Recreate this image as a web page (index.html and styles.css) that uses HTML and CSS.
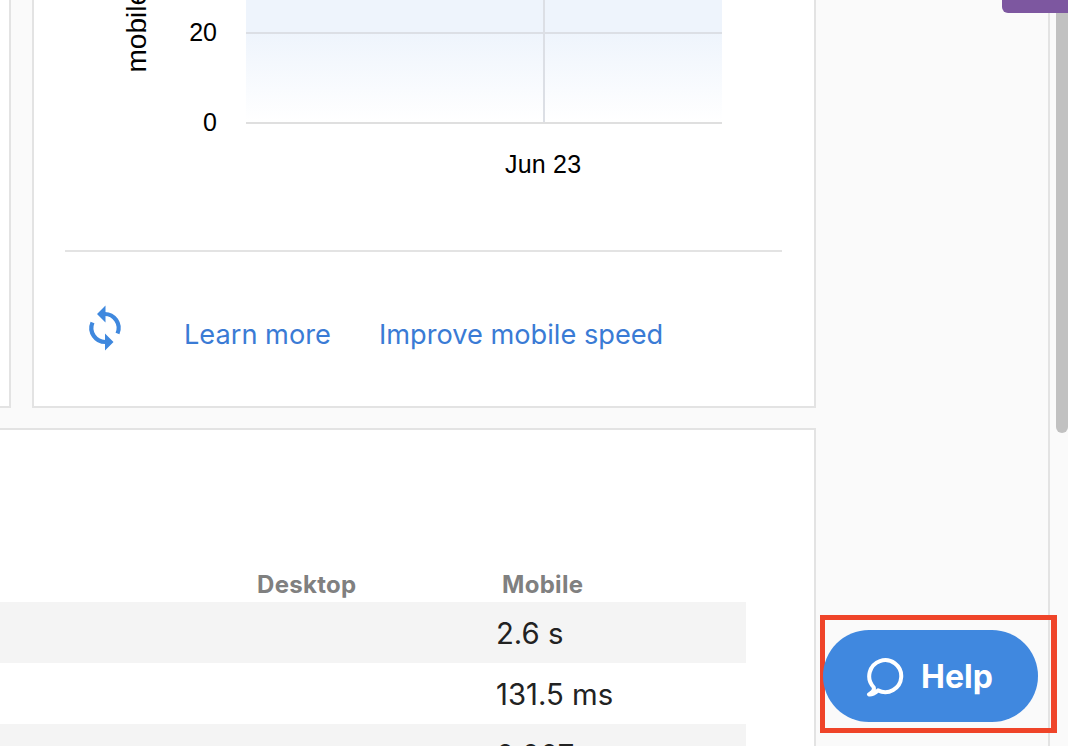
FILE: index.html
```html
<!DOCTYPE html>
<html>
<head>
    <title>Speed report</title>
    <link rel="stylesheet" href="styles.css">
</head>
<body>
    <div class="page">
        <main class="content">
            <div class="top-row">
                <section class="card side-card"></section>

                <!-- Mobile speed chart -->
                <section class="card chart-card">
                    <div class="chart">
                        <div class="y-title-box"><span class="y-title">mobile</span></div>
                        <div class="y-ticks">
                            <span class="tick tick-20">20</span>
                            <span class="tick tick-0">0</span>
                        </div>
                        <div class="plot-wrap">
                            <div class="plot"></div>
                            <div class="x-label">Jun 23</div>
                        </div>
                    </div>
                    <div class="card-footer">
                        <svg class="refresh-icon" viewBox="0 0 50 55" width="50" height="55">
                            <path fill="none" stroke="#3f88de" stroke-width="4.200" d="M24 14A14 14 0 0 1 37.500 33.500M12.500 22.500A14 14 0 0 0 26 42"/>
                            <path fill="#3f88de" d="M17 14L25.500 5.500V22.500ZM33.500 42L25 33.500V50.500Z"/>
                        </svg>
                        <a class="link link-learn">Learn more</a>
                        <a class="link">Improve mobile speed</a>
                    </div>
                </section>
            </div>

            <!-- Metrics table -->
            <section class="card table-card">
                <div class="table-head">
                    <span class="head-desktop">Desktop</span>
                    <span class="head-mobile">Mobile</span>
                </div>
                <div class="row shaded"><span class="cell">2.6 s</span></div>
                <div class="row"><span class="cell">131.5 ms</span></div>
                <div class="row shaded"><span class="cell">0.007</span></div>
            </section>
        </main>

        <!-- Fake browser scrollbar -->
        <div class="scrollbar"><div class="thumb"></div></div>
    </div>

    <div class="purple-tab"></div>

    <div class="help-outline">
        <button class="help-btn">
            <svg class="help-icon" viewBox="0 0 40 44" width="40" height="44">
                <path fill="none" stroke="#fff" stroke-width="4" stroke-linecap="round" stroke-linejoin="round" d="M12 34.400A16 16 0 1 0 7.500 31C8.500 33 7 36 3 38.500C6 39 9 37 12 34.400Z"/>
            </svg>
            <span>Help</span>
        </button>
    </div>
</body>
</html>
```

FILE: styles.css
```css
html, body {
    margin: 0;
    padding: 0;
    height: 100%;
    overflow: hidden;
}

body {
    background: #fafafa;
    font-family: 'Inter', 'Liberation Sans', sans-serif;
    color: #222;
}

.page {
    display: flex;
    height: 746px;
    overflow: hidden;
}

.content {
    width: 816px;
    flex-shrink: 0;
}

.card {
    background: #fff;
    border: 2px solid #e3e3e3;
    box-sizing: border-box;
}

.top-row {
    display: flex;
    gap: 21px;
    height: 408px;
}

.side-card {
    width: 11px;
    border-left: none;
    border-top: none;
}

.chart-card {
    flex: 1;
    border-top: none;
    padding: 0 32px 0 31px;
}

/* Chart */
.chart {
    display: flex;
    height: 252px;
    box-sizing: border-box;
    border-bottom: 2px solid #e3e3e3;
}

.y-title-box {
    width: 58px;
    height: 74px;
    position: relative;
}

.y-title {
    position: absolute;
    right: -28px;
    bottom: 2px;
    writing-mode: vertical-rl;
    transform: rotate(180deg);
    font-family: 'Liberation Sans', sans-serif;
    font-size: 28px;
    line-height: 28px;
    color: #000;
    white-space: nowrap;
}

.y-ticks {
    width: 123px;
    position: relative;
    font-family: 'Liberation Sans', sans-serif;
    font-size: 25px;
    color: #000;
}

.tick {
    position: absolute;
    right: 29px;
    line-height: 28px;
}

.tick-20 { top: 18px; }
.tick-0 { top: 108px; }

.plot-wrap {
    width: 476px;
}

.plot {
    height: 124px;
    box-sizing: border-box;
    border-bottom: 2px solid #dfdfdf;
    background-color: #fff;
    background-image:
        linear-gradient(#dcdfe5, #dcdfe5),
        linear-gradient(#dcdfe5, #dcdfe5),
        linear-gradient(#eef4fc 25%, #ffffff 100%);
    background-size: 100% 2px, 2px 100%, 100% 100%;
    background-position: 0 32px, 297px 0, 0 0;
    background-repeat: no-repeat;
}

.x-label {
    margin-top: 26px;
    margin-left: 259px;
    font-family: 'Liberation Sans', sans-serif;
    font-size: 25px;
    letter-spacing: 0.2px;
    line-height: 28px;
    color: #000;
}

/* Footer links */
.card-footer {
    display: flex;
    align-items: flex-start;
    height: 154px;
    box-sizing: border-box;
    padding: 48px 0 0 15px;
}

.refresh-icon {
    flex-shrink: 0;
}

.link {
    color: #3a7bd5;
    font-size: 27.2px;
    line-height: 34px;
    margin-top: 18px;
}

.link-learn {
    margin-left: 54px;
    margin-right: 48px;
}

/* Table */
.table-card {
    margin-top: 20px;
    height: 400px;
    border-left: none;
}

.table-head {
    display: flex;
    height: 172px;
    box-sizing: border-box;
    padding-bottom: 3px;
    align-items: flex-end;
    font-size: 24px;
    letter-spacing: 0.3px;
    font-weight: 700;
    color: #808080;
    line-height: 28px;
}

.head-desktop { margin-left: 257px; width: 245px; }

.row {
    width: 746px;
    height: 61px;
    display: flex;
    align-items: center;
}

.shaded {
    background: #f4f4f4;
}

.cell {
    margin-left: 496px;
    margin-top: 2px;
    font-size: 29.3px;
    color: #222;
}

/* Scrollbar */
.scrollbar {
    position: absolute;
    top: 0;
    right: 0;
    width: 18px;
    height: 746px;
    background: #fafafa;
    border-left: 2px solid #e3e3e3;
}

.thumb {
    position: absolute;
    right: 0;
    top: 0;
    width: 12px;
    height: 433px;
    background: #c1c1c1;
    border-radius: 0 0 6px 6px;
}

.purple-tab {
    position: absolute;
    top: 0;
    right: 0;
    width: 66px;
    height: 13px;
    background: #7d57a0;
    border-radius: 0 0 0 6px;
}

/* Help button */
.help-outline {
    position: absolute;
    left: 820px;
    top: 615px;
    width: 237px;
    height: 118px;
    box-sizing: border-box;
    border: 5px solid #ef4429;
    border-right-width: 6px;
}

.help-btn {
    position: absolute;
    left: -2px;
    top: 10px;
    width: 215px;
    height: 92px;
    border: none;
    border-radius: 46px;
    background: #4088df;
    color: #fff;
    font-family: 'Inter', 'Liberation Sans', sans-serif;
    font-size: 32px;
    font-weight: 700;
    display: flex;
    align-items: center;
    gap: 15px;
    padding: 0 0 0 43px;
}

.help-icon {
    flex-shrink: 0;
    margin-top: 4px;
}
```
